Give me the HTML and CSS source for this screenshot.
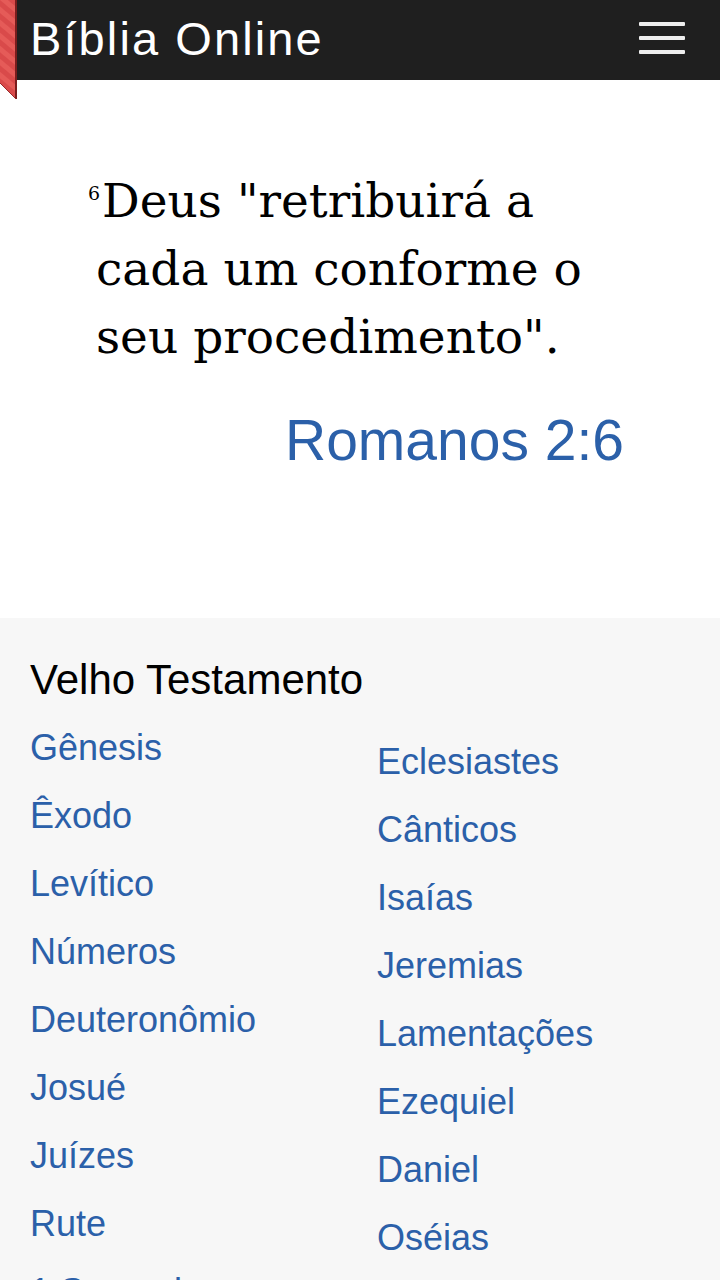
FILE: index.html
```html
<!DOCTYPE html>
<html lang="pt">
<head>
<meta charset="utf-8">
<title>Bíblia Online</title>
<link rel="stylesheet" href="styles.css">
</head>
<body>
<header class="topbar">
  <svg class="ribbon" width="17" height="100" viewBox="0 0 17 100">
    <defs>
      <pattern id="stripes" width="10" height="10" patternUnits="userSpaceOnUse" patternTransform="rotate(-50)">
        <rect width="10" height="10" fill="#d94a4a"/>
        <rect width="5" height="10" fill="#e55b58"/>
      </pattern>
    </defs>
    <polygon points="0,0 16,0 16,99 0,83" fill="url(#stripes)"/>
    <line x1="16" y1="0" x2="16" y2="99" stroke="#7a1d1d" stroke-width="2"/>
    <line x1="0" y1="83" x2="16" y2="99" stroke="#9a2a2a" stroke-width="1"/>
  </svg>
  <h1 class="brand">Bíblia Online</h1>
  <button class="menu" aria-label="Menu">
    <span></span><span></span><span></span>
  </button>
</header>

<section class="verse">
  <p class="verse-text"><sup class="num">6</sup>Deus "retribuirá a<br>cada um conforme o<br>seu procedimento".</p>
  <a class="ref" href="#">Romanos 2:6</a>
</section>

<section class="books">
  <h2 class="books-title">Velho Testamento</h2>
  <div class="cols">
    <ul class="col">
      <li><a href="#">Gênesis</a></li>
      <li><a href="#">Êxodo</a></li>
      <li><a href="#">Levítico</a></li>
      <li><a href="#">Números</a></li>
      <li><a href="#">Deuteronômio</a></li>
      <li><a href="#">Josué</a></li>
      <li><a href="#">Juízes</a></li>
      <li><a href="#">Rute</a></li>
      <li><a href="#">1 Samuel</a></li>
    </ul>
    <ul class="col col-right">
      <li><a href="#">Eclesiastes</a></li>
      <li><a href="#">Cânticos</a></li>
      <li><a href="#">Isaías</a></li>
      <li><a href="#">Jeremias</a></li>
      <li><a href="#">Lamentações</a></li>
      <li><a href="#">Ezequiel</a></li>
      <li><a href="#">Daniel</a></li>
      <li><a href="#">Oséias</a></li>
    </ul>
  </div>
</section>
</body>
</html>
```

FILE: styles.css
```css
html, body {
  margin: 0;
  padding: 0;
  background: #ffffff;
  font-family: "Liberation Sans", Arial, sans-serif;
}

.topbar {
  position: relative;
  height: 80px;
  background: #1f1f1f;
  display: flex;
  align-items: center;
  justify-content: space-between;
  padding: 0 35px 0 30px;
}

.ribbon {
  position: absolute;
  left: 0;
  top: 0;
  z-index: 2;
}

.brand {
  margin: 0;
  color: #ffffff;
  font-weight: normal;
  font-size: 47px;
  letter-spacing: 2.1px;
  line-height: 80px;
  position: relative;
  top: -1px;
}

.menu {
  background: none;
  border: 0;
  padding: 0;
  width: 46px;
  display: flex;
  flex-direction: column;
  gap: 10px;
  cursor: pointer;
  position: relative;
  top: -2px;
}

.menu span {
  display: block;
  height: 4px;
  border-radius: 1px;
  background: #eeeeee;
}

.verse {
  padding: 87px 90px 145px 96px;
  display: flex;
  flex-direction: column;
}

.verse-text {
  margin: 0;
  font-family: "DejaVu Serif", "Liberation Serif", serif;
  font-size: 47px;
  line-height: 68px;
  color: #000000;
}

.num {
  font-size: 19px;
  vertical-align: top;
  line-height: 52px;
  margin-left: -8px;
  margin-right: 2px;
}

.ref {
  align-self: flex-end;
  margin-top: 37px;
  margin-right: 6px;
  color: #2b60a9;
  text-decoration: none;
  font-size: 57px;
  line-height: 65px;
}

.books {
  background: #f7f7f7;
  padding: 38px 30px 0 30px;
  height: 624px;
  overflow: hidden;
}

.books-title {
  margin: 0 0 10px 0;
  font-weight: normal;
  font-size: 42px;
  line-height: 48px;
  color: #000000;
}

.cols {
  display: grid;
  grid-template-columns: 347px 1fr;
}

.col {
  list-style: none;
  margin: 0;
  padding: 0;
}

.col-right {
  padding-top: 14px;
}

.col li {
  height: 68px;
  line-height: 68px;
  font-size: 36px;
}

.col a {
  color: #2b60a9;
  text-decoration: none;
}
```
